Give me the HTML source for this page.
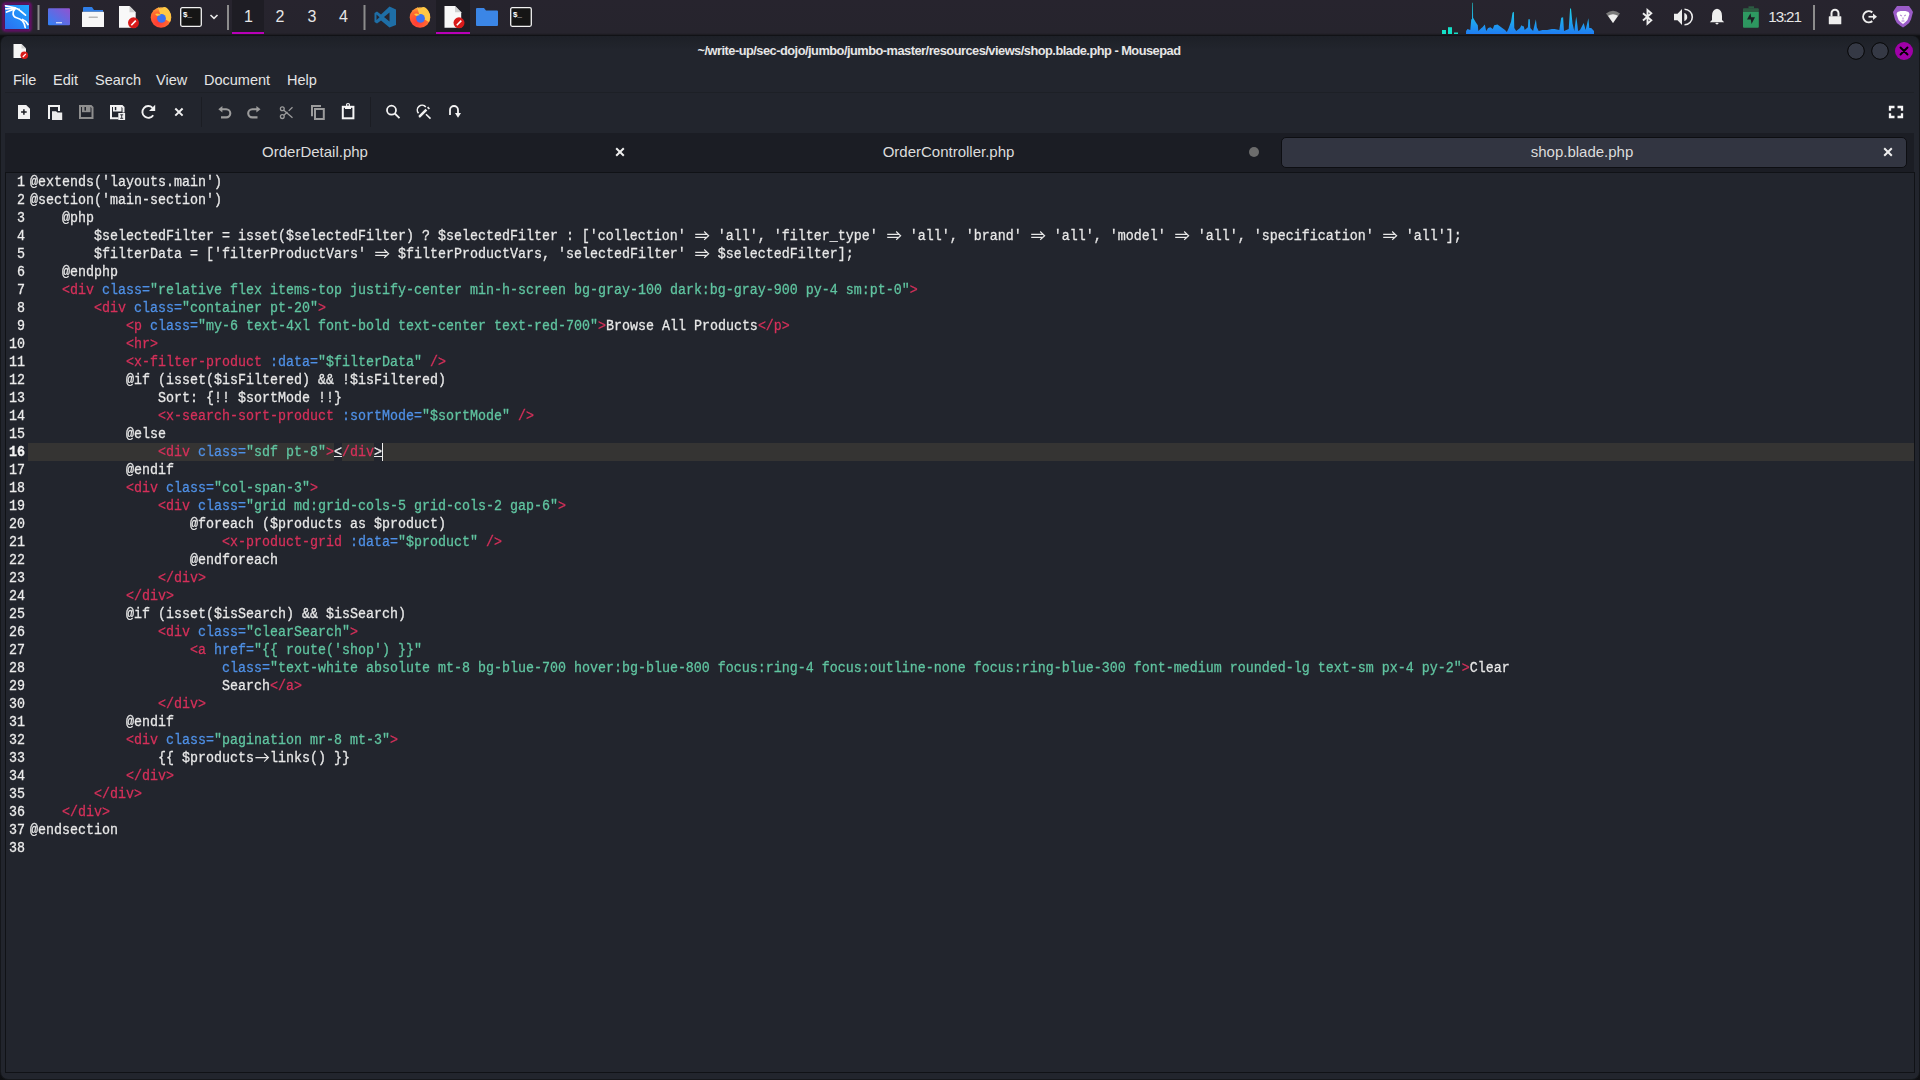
<!DOCTYPE html>
<html><head><meta charset="utf-8">
<style>
*{margin:0;padding:0;box-sizing:border-box}
html,body{width:1920px;height:1080px;overflow:hidden;background:#0e0f12;font-family:"Liberation Sans",sans-serif}
.abs{position:absolute}
#panel{position:absolute;left:0;top:0;width:1920px;height:36px;background:linear-gradient(#27242e 0,#26242d 33px,#1d1c22 34.5px,#111216 35px,#111216 36px)}
#win{position:absolute;left:0;top:36px;width:1920px;height:1044px;background:linear-gradient(#1d2027 0,#22252d 14px);border-radius:7px 7px 8px 8px;border:1px solid #15171b;border-top:none}
#title{position:absolute;left:0;top:43px;width:1878px;text-align:center;font-weight:bold;font-size:12.8px;letter-spacing:-0.5px;color:#e6e6e6;line-height:16px}
.menu{position:absolute;top:71px;font-size:14.5px;color:#e4e4e4;line-height:18px}
#tabbar{position:absolute;left:5px;top:133px;width:1909px;height:39px;background:#1b1d24}
.tab{position:absolute;top:0;height:39px;font-size:15px;color:#dcdcdc;line-height:39px;text-align:center}
#editor{position:absolute;left:5px;top:172px;width:1910px;height:901px;background:#22252d;border:1px solid #101216}
#gutter{position:absolute;left:0;top:174px;width:25px;font-family:"Liberation Mono",monospace;font-size:13.34px;line-height:18px;color:#ececec;text-align:right;white-space:pre}
#gutter .cur{font-weight:bold;color:#f4f4f4}
#code{position:absolute;left:30px;top:174px;font-family:"Liberation Mono",monospace;font-size:13.34px;line-height:18px;color:#e8e8e8;white-space:pre}
#code div,#gutter div{height:18px;transform:scaleY(1.1);transform-origin:0 12.6px;-webkit-text-stroke:0.25px currentColor}
.t{color:#d6305a}
.a{color:#4f90e6}
.s{color:#60c4a0}
.tn{color:#d6305a}
.m{color:#f0f0f0}
#curline{position:absolute;left:28px;top:443px;width:1886px;height:18px;background:#353433}
#cursor{position:absolute;left:382px;top:443px;width:1px;height:18px;background:#f0f0f0}
i.dar,i.sar{display:inline-block;width:16px;height:18px;vertical-align:top;position:relative}
i.dar::before{content:"";position:absolute;left:2px;top:6px;width:9px;height:5px;border-top:1.5px solid #e8e8e8;border-bottom:1.5px solid #e8e8e8}
i.dar::after{content:"";position:absolute;left:8px;top:5px;width:6px;height:6px;border-top:1.5px solid #e8e8e8;border-right:1.5px solid #e8e8e8;transform:rotate(45deg) translate(1px,1px)}
i.sar::before{content:"";position:absolute;left:2px;top:9px;width:11px;height:0;border-top:1.5px solid #e8e8e8}
i.sar::after{content:"";position:absolute;left:8px;top:6px;width:5px;height:5px;border-top:1.5px solid #e8e8e8;border-right:1.5px solid #e8e8e8;transform:rotate(45deg) translate(1px,1px)}
svg{position:absolute;overflow:visible}
svg.lig{position:static;display:inline-block;vertical-align:top}
</style></head><body>
<div id="panel"></div>
<div id="win"></div>
<svg style="left:0;top:0" width="1920" height="36" viewBox="0 0 1920 36">
<defs>
<linearGradient id="kg" x1="0" y1="1" x2="1" y2="0"><stop offset="0" stop-color="#2b6ef0"/><stop offset="1" stop-color="#1fa5ff"/></linearGradient>
<linearGradient id="dg" x1="0" y1="1" x2="1" y2="0"><stop offset="0" stop-color="#2f82f6"/><stop offset="1" stop-color="#9352cf"/></linearGradient>
<radialGradient id="ffg" cx="0.35" cy="0.75" r="0.9"><stop offset="0" stop-color="#ff3838"/><stop offset="0.55" stop-color="#ff6a30"/><stop offset="1" stop-color="#ffd84a"/></radialGradient>
<linearGradient id="cpug" x1="0" y1="0" x2="0" y2="1"><stop offset="0" stop-color="#1ee6e6"/><stop offset="1" stop-color="#1f7cf2"/></linearGradient>
<linearGradient id="batg" x1="0" y1="0" x2="0" y2="1"><stop offset="0" stop-color="#2c5c42"/><stop offset="0.18" stop-color="#2c5c42"/><stop offset="0.18" stop-color="#2e9a62"/><stop offset="1" stop-color="#2d955f"/></linearGradient>
</defs>
<!-- kali -->
<filter id="glow" x="-30%" y="-30%" width="160%" height="160%"><feGaussianBlur stdDeviation="0.9"/></filter><rect x="3.6" y="3.6" width="26.8" height="26.8" rx="1.5" fill="none" stroke="#8c0a8c" stroke-width="1.8" filter="url(#glow)"/>
<rect x="5" y="5" width="24" height="24" fill="url(#kg)"/>
<g fill="none" stroke="#fff" stroke-width="1.7" stroke-linecap="round" stroke-linejoin="round">
<path d="M5.5 5.8 L15 7.8 M5.8 8.8 L14.5 8.2 M6.5 12 L14.8 9"/>
<path d="M14.8 7.8 C17 8.2 19 9.5 20.5 11 L25.5 15.2"/>
<path d="M14.8 9.2 C12 12 12.5 16.8 16.5 17.8 C21.5 19 24.5 21.5 25.2 27.5"/>
<path d="M22.5 19.5 C25 20.5 27 22.5 28 24.5"/>
</g>
<circle cx="19.3" cy="9.2" r="0.8" fill="#fff"/>
<rect x="37.5" y="5" width="2" height="25" fill="#8c8c8c"/>
<!-- desktop -->
<rect x="48" y="8.3" width="22" height="17" rx="1" fill="url(#dg)"/>
<rect x="56.3" y="22" width="1.4" height="1.4" fill="#fff"/><rect x="58.3" y="22" width="1.4" height="1.4" fill="#fff"/><rect x="60.3" y="22" width="1.4" height="1.4" fill="#fff"/>
<!-- folder white -->
<path d="M83 11.7 V8 Q83 7 84 7 H92 L94 10 H103 V11.7 Z" fill="#2f7ee8"/>
<rect x="82" y="11.7" width="22" height="15.3" rx="0.5" fill="#f7f7f7"/>
<rect x="88.5" y="16.5" width="9.5" height="1.6" rx="0.8" fill="#b8b8b8"/>
<!-- mousepad -->
<path d="M119 6 H129.5 L135.7 12.2 V27.7 H119 Z" fill="#f8f8f8"/>
<path d="M129.5 6 L135.7 12.2 H129.5 Z" fill="#cfcfcf"/>
<circle cx="133.5" cy="22.8" r="5.5" fill="#d91a1a"/>
<path d="M131.3 25.2 L135.8 20.6" stroke="#fff" stroke-width="1.6"/>
<!-- firefox -->
<circle cx="161" cy="17.5" r="10.3" fill="url(#ffg)"/>
<path d="M158 7 Q161 10 162 8 Q166 5 170 12 Q172 17 170 22 L161 17 Z" fill="#ffc845"/>
<circle cx="161.5" cy="18.3" r="4.4" fill="#3a72f2"/>
<path d="M155 14 Q158 12.5 161 15 L157 16 Z" fill="#ffc83a"/>
<!-- terminal -->
<rect x="180.7" y="7.7" width="20.6" height="18.6" rx="1.5" fill="#151515" stroke="#f2f2f2" stroke-width="1.3"/>
<text x="183" y="16.5" font-family="Liberation Sans" font-weight="bold" font-size="8" fill="#fff">$_</text>
<path d="M210.5 15 L214 18.3 L217.5 15" fill="none" stroke="#e8e8e8" stroke-width="1.6"/>
<rect x="227" y="5" width="2" height="25" fill="#8c8c8c"/>
<!-- workspaces -->
<rect x="232" y="0" width="32" height="32" fill="#1e1d24"/>
<rect x="232" y="32" width="32" height="2" fill="#b800b8"/>
<g font-family="Liberation Sans" font-size="16" fill="#e6e6e6" text-anchor="middle">
<text x="248.5" y="22.1">1</text><text x="280" y="22.1">2</text><text x="312" y="22.1">3</text><text x="343.5" y="22.1">4</text>
</g>
<rect x="363.5" y="5" width="2" height="25" fill="#8c8c8c"/>
<!-- vscode -->
<path d="M389.5 6.5 L396 9.5 V25 L389.5 27.5 L381 20.5 L377 23.5 L374.5 22 V13 L377 11.5 L381 14.5 Z M389.5 12.5 L384 17 L389.5 21.5 Z M376.5 14.5 V20 L379.5 17.2 Z" fill="#1e6ea6" fill-rule="evenodd"/>
<!-- firefox 2 -->
<circle cx="420" cy="17.5" r="10.3" fill="url(#ffg)"/>
<path d="M417 7 Q420 10 421 8 Q425 5 429 12 Q431 17 429 22 L420 17 Z" fill="#ffc845"/>
<circle cx="420.5" cy="18.3" r="4.4" fill="#3a72f2"/>
<path d="M414 14 Q417 12.5 420 15 L416 16 Z" fill="#ffc83a"/>
<!-- active mousepad -->
<rect x="436" y="0" width="34" height="32" fill="#1e1d24"/>
<rect x="436" y="32" width="34" height="2" fill="#b800b8"/>
<path d="M444.5 6 H455 L461.2 12.2 V27.7 H444.5 Z" fill="#f8f8f8"/>
<path d="M455 6 L461.2 12.2 H455 Z" fill="#cfcfcf"/>
<circle cx="459" cy="22.8" r="5.5" fill="#d91a1a"/>
<path d="M456.8 25.2 L461.3 20.6" stroke="#fff" stroke-width="1.6"/>
<!-- blue folder -->
<path d="M476 11 V9 Q476 8 477 8 H484 L486 10.5 H497 Q498 10.5 498 11.5 V25 Q498 26 497 26 H477 Q476 26 476 25 Z" fill="#3b86e6"/>
<!-- terminal 2 -->
<rect x="510.7" y="7.7" width="20.6" height="18.6" rx="1.5" fill="#151515" stroke="#f2f2f2" stroke-width="1.3"/>
<text x="513" y="16.5" font-family="Liberation Sans" font-weight="bold" font-size="8" fill="#fff">$_</text>
<!-- cpu -->
<rect x="1442" y="30" width="4" height="4" fill="#14e0c8"/>
<rect x="1448" y="27.2" width="4" height="6.8" fill="#14e0c8"/>
<rect x="1454" y="32.5" width="4" height="1.5" fill="#14e0c8"/>
<path id="cpu" fill="url(#cpug)" d="M1466 34 L1466.1 30.9 L1467.5 29.1 L1470.3 30.0 L1471.2 19.7 L1472.0 18.7 L1472.4 2.8 L1472.9 2.8 L1473.1 17.8 L1475.9 22.5 L1477.8 25.3 L1478.3 30.9 L1481.5 28.1 L1482.5 27.2 L1484.8 24.4 L1486.2 30.9 L1488.1 28.1 L1490.4 27.2 L1492.8 29.1 L1494.2 25.3 L1497.5 24.4 L1501.2 27.2 L1505.0 30.0 L1506.9 31.9 L1508.7 28.1 L1511.1 21.6 L1512.5 12.7 L1513.9 11.7 L1514.3 28.1 L1516.2 30.9 L1520.0 28.1 L1521.4 25.3 L1522.8 26.2 L1523.7 26.2 L1524.7 30.0 L1527.9 27.2 L1528.4 19.2 L1529.8 19.2 L1530.3 28.1 L1533.1 30.9 L1535.9 19.2 L1536.8 27.2 L1538.7 30.9 L1542.5 30.0 L1547.2 30.0 L1551.8 29.1 L1554.6 29.1 L1559.3 30.0 L1561.2 17.8 L1563.1 17.3 L1564.0 30.9 L1568.7 29.1 L1570.1 8.4 L1571.0 8.4 L1572.5 23.4 L1574.3 30.9 L1576.2 16.4 L1577.1 22.5 L1578.1 30.9 L1580.0 30.0 L1583.7 23.0 L1585.6 30.0 L1588.4 18.3 L1589.3 28.1 L1591.2 28.1 L1594.0 30.9 L1594 34 Z"/>
<!-- wifi -->
<path d="M1613 23 L1606 13.5 Q1613 8 1620 13.5 Z" fill="#7a7a7a"/>
<path d="M1613 23 L1608 15.8 Q1613 12.8 1618 15.8 Z" fill="#eeeeee"/>
<!-- bluetooth -->
<path d="M1643 13.2 L1651.3 20.3 L1647.5 23.6 V10 L1651.3 13.3 L1643 20.5" fill="none" stroke="#eeeeee" stroke-width="1.9" stroke-linejoin="miter"/>
<!-- volume -->
<path d="M1674 13.8 H1677.5 L1682 9 V25 L1677.5 20.2 H1674 Z" fill="#eeeeee"/>
<path d="M1684.5 9.2 A7.8 7.8 0 0 1 1684.5 24.8" fill="none" stroke="#eeeeee" stroke-width="1.6"/>
<path d="M1684.3 13 A4.2 4.2 0 0 1 1684.3 21 Z" fill="#eeeeee"/>
<!-- bell -->
<path d="M1717 8.8 Q1722 9.5 1722 16 V20 L1724.2 22.2 H1709.8 L1712 20 V16 Q1712 9.5 1717 8.8 Z" fill="#eeeeee"/>
<ellipse cx="1717" cy="23.6" rx="1.6" ry="0.8" fill="#eeeeee"/>
<!-- battery -->
<rect x="1748.5" y="6.3" width="5.5" height="2" fill="#2c5c42"/>
<rect x="1743" y="8.2" width="15.8" height="19.6" rx="1" fill="url(#batg)"/>
<path d="M1750.5 13.2 L1747 19.5 H1750.8 L1751.5 24 L1755 17.3 H1751.2 Z" fill="#1d1e24"/>
<!-- clock -->
<text x="1768.3" y="22" font-family="Liberation Sans" font-size="15.2" letter-spacing="-1.1" fill="#e6e6e6">13:21</text>
<rect x="1813" y="5" width="2" height="25" fill="#8c8c8c"/>
<!-- lock -->
<path d="M1831.5 16.5 V13.2 A3.5 3.5 0 0 1 1838.5 13.2 V16.5" fill="none" stroke="#eeeeee" stroke-width="2"/>
<rect x="1828.8" y="16.2" width="12.5" height="8" rx="0.5" fill="#eeeeee"/>
<!-- logout -->
<path d="M1872.3 12.4 A5.6 5.6 0 1 0 1872.3 21.1" fill="none" stroke="#eeeeee" stroke-width="2"/>
<path d="M1868.5 16.75 H1874" stroke="#eeeeee" stroke-width="1.7"/>
<path d="M1873 13.5 L1877 16.75 L1873 20 Z" fill="#eeeeee"/>
<!-- brave -->
<path d="M1897 6 H1909 L1911.5 9.5 L1913 12 L1911 19.5 Q1910 23 1906 25.5 L1903 27.5 L1900 25.5 Q1896 23 1895 19.5 L1893 12 L1894.5 9.5 Z" fill="#9b5cc8"/>
<path d="M1897.5 12 L1900.5 11 H1905.5 L1908.5 12 L1909.5 14 L1907.5 20 L1905.5 22 L1903 24 L1900.5 22 L1898.5 20 L1896.5 14 Z" fill="#ffffff"/>
<path d="M1900 15 L1902 16 M1906 15 L1904 16 M1903 17.5 V19.5 M1901.5 21 H1904.5" stroke="#9b5cc8" stroke-width="0.8" fill="none"/>
</svg>
<svg style="left:0;top:36px" width="1920" height="100" viewBox="0 36 1920 100">
<!-- title icon -->
<path d="M13.5 44 H21.5 L26 48.5 V58 H13.5 Z" fill="#f6f6f6"/>
<path d="M21.5 44 L26 48.5 H21.5 Z" fill="#cfcfcf"/>
<circle cx="24.3" cy="55.3" r="3.8" fill="#d91a1a"/>
<path d="M22.8 57 L25.8 53.8" stroke="#fff" stroke-width="1.2"/>
<!-- window buttons -->
<circle cx="1856" cy="51" r="8.3" fill="#353945" stroke="#050505" stroke-width="1"/>
<circle cx="1880" cy="51" r="8.3" fill="#353945" stroke="#050505" stroke-width="1"/>
<circle cx="1904" cy="51" r="9" fill="#a000a8"/>
<path d="M1900.5 47.5 L1907.5 54.5 M1907.5 47.5 L1900.5 54.5" stroke="#000" stroke-width="1.9" stroke-linecap="round"/>
<!-- menu separator -->
<rect x="5" y="92" width="1909" height="1" fill="#1d2026"/>
<!-- toolbar -->
<g fill="#f2f2f2">
<path d="M18 105 H26.2 L30 108.8 V119 H18 Z"/>
</g>
<path d="M23.9 109.2 V114.8 M21.1 112 H26.7" stroke="#1c1e24" stroke-width="1.5"/>
<path d="M49 119 V106 H59 V111" fill="none" stroke="#f2f2f2" stroke-width="2"/>
<path d="M52 120 V111.3 H56 L57.5 112.5 H62.2 V120 Z" fill="#ececec"/>
<!-- save grey -->
<path d="M80 106 H91 L92.5 107.5 V118 H80 Z" fill="none" stroke="#8e8e8e" stroke-width="2"/>
<rect x="82" y="106" width="8.5" height="6.2" fill="#8e8e8e"/>
<rect x="84.5" y="107" width="1.5" height="3.6" fill="#22252c"/>
<!-- save as -->
<path d="M118.5 118.2 H111 V106 H122 L123.5 107.5 V112.5" fill="none" stroke="#f2f2f2" stroke-width="2"/>
<rect x="113" y="106" width="8.5" height="5.5" fill="#f2f2f2"/>
<rect x="114.8" y="107" width="1.5" height="3.2" fill="#22252c"/>
<rect x="118.3" y="113" width="6.8" height="7" fill="#f2f2f2"/>
<path d="M120.2 114.8 H123.2 M121.7 114.8 V118.3 M120.2 118.3 H123.2" stroke="#22252c" stroke-width="0.9"/>
<!-- reload -->
<path d="M153.2 115.2 A5.9 5.9 0 1 1 152.5 107.8" fill="none" stroke="#f2f2f2" stroke-width="1.9"/>
<path d="M155.2 104.8 V111 H149 Z" fill="#f2f2f2"/>
<!-- close -->
<path d="M175.3 108.5 L182.6 115.6 M182.6 108.5 L175.3 115.6" stroke="#efefef" stroke-width="2"/>
<rect x="201" y="97" width="1" height="30" fill="#1b1d23"/>
<!-- undo -->
<path d="M221 109.2 H226.2 A4.1 4.1 0 0 1 226.2 117.4 H221" fill="none" stroke="#9c9c9c" stroke-width="2.1"/>
<path d="M218.3 109.2 L222.4 106 V112.4 Z" fill="#9c9c9c"/>
<!-- redo -->
<path d="M257.5 109.2 H252.3 A4.1 4.1 0 0 0 252.3 117.4 H257.5" fill="none" stroke="#9c9c9c" stroke-width="2.1"/>
<path d="M260.5 109.2 L256.4 106 V112.4 Z" fill="#9c9c9c"/>
<!-- cut -->
<g fill="none" stroke="#9c9c9c" stroke-width="1.3">
<circle cx="282.3" cy="108.7" r="1.9"/>
<circle cx="282.3" cy="116.6" r="1.9"/>
<path d="M283.8 115.2 L287.5 112 M288.7 110.9 L292.5 107.2 M283.8 110.2 L292.5 117.7"/>
</g>
<!-- copy -->
<path d="M312 116.3 V106 H321" fill="none" stroke="#9c9c9c" stroke-width="2"/>
<rect x="315" y="109" width="8.8" height="10" fill="none" stroke="#9c9c9c" stroke-width="2"/>
<!-- paste -->
<rect x="342.8" y="106.8" width="10.6" height="11.5" fill="none" stroke="#f6f6f6" stroke-width="2"/>
<path d="M345 106 H351 V109 H345 Z" fill="#f6f6f6"/>
<circle cx="348" cy="105" r="1.5" fill="none" stroke="#f6f6f6" stroke-width="1.2"/>
<rect x="370" y="97" width="1" height="30" fill="#1b1d23"/>
<!-- find -->
<circle cx="391.5" cy="110.2" r="4.5" fill="none" stroke="#f2f2f2" stroke-width="1.8"/>
<path d="M394.8 113.5 L399.5 118.2" stroke="#f2f2f2" stroke-width="1.8"/>
<!-- replace -->
<path d="M418.5 113.2 A4.6 4.6 0 0 1 425.8 106.9" fill="none" stroke="#f2f2f2" stroke-width="1.6"/>
<path d="M419 117.6 L418.5 115.8 L425.5 108.8 L427.3 110.6 L420.3 117.6 Z" fill="#f2f2f2"/>
<path d="M427 107.8 L428.2 106.6 L430 108.4 L428.8 109.6 Z" fill="#f2f2f2"/>
<path d="M426 114.2 L430.5 118.6" stroke="#f2f2f2" stroke-width="1.6"/>
<!-- goto -->
<path d="M450 115 V110 A4 4 0 0 1 458 110 V113.5" fill="none" stroke="#f2f2f2" stroke-width="1.8"/>
<path d="M455 113 H461 L458 117.8 Z" fill="#f2f2f2"/>
<!-- fullscreen -->
<path d="M1890 110.7 V107 H1894.5 M1897.5 107 H1902 V110.7 M1902 113.3 V117 H1897.5 M1894.5 117 H1890 V113.3" fill="none" stroke="#f6f6f6" stroke-width="2.3"/>
</svg>

<!-- title bar -->
<div id="title">~/write-up/sec-dojo/jumbo/jumbo-master/resources/views/shop.blade.php - Mousepad</div>

<!-- menu -->
<div class="menu" style="left:13px">File</div>
<div class="menu" style="left:53px">Edit</div>
<div class="menu" style="left:95px">Search</div>
<div class="menu" style="left:156px">View</div>
<div class="menu" style="left:204px">Document</div>
<div class="menu" style="left:287px">Help</div>

<!-- tabs -->
<div id="tabbar"></div>
<div class="tab" style="left:5px;top:132px;width:620px">OrderDetail.php</div>
<div class="tab" style="left:641px;top:132px;width:615px">OrderController.php</div>
<div class="abs" style="left:1281px;top:137px;width:626px;height:31px;background:#323541;border:1px solid #0d0e12;border-radius:5px"></div>
<div class="tab" style="left:1281px;top:132px;width:602px">shop.blade.php</div>

<!-- tab decorations -->
<svg style="left:0;top:133px" width="1920" height="40" viewBox="0 133 1920 40">
<path d="M616.2 148.2 L623.8 155.8 M623.8 148.2 L616.2 155.8" stroke="#eeeeee" stroke-width="2"/>
<circle cx="1254" cy="152" r="5" fill="#6c6c6c"/>
<path d="M1884.2 148.2 L1891.8 155.8 M1891.8 148.2 L1884.2 155.8" stroke="#eeeeee" stroke-width="2"/>
</svg>
<div id="editor"></div>
<div id="curline"></div>
<div class="abs" style="left:334px;top:443px;width:8px;height:18px;background:#22252d"></div><div class="abs" style="left:374px;top:443px;width:8px;height:18px;background:#22252d"></div>
<div id="gutter"><div>1</div><div>2</div><div>3</div><div>4</div><div>5</div><div>6</div><div>7</div><div>8</div><div>9</div><div>10</div><div>11</div><div>12</div><div>13</div><div>14</div><div>15</div><div class=cur>16</div><div>17</div><div>18</div><div>19</div><div>20</div><div>21</div><div>22</div><div>23</div><div>24</div><div>25</div><div>26</div><div>27</div><div>28</div><div>29</div><div>30</div><div>31</div><div>32</div><div>33</div><div>34</div><div>35</div><div>36</div><div>37</div><div>38</div></div>
<div id="code"><div>@extends('layouts.main')</div><div>@section('main-section')</div><div>    @php</div><div>        $selectedFilter = isset($selectedFilter) ? $selectedFilter : ['collection' <svg class="lig" width="16" height="18" viewBox="0 0 16 18"><path d="M1.2 6.87 H13.3 M1.2 9.69 H13.3 M10.2 4.42 L14.6 8.24 L10.2 11.9" fill="none" stroke="#e8e8e8" stroke-width="1.15"/></svg> 'all', 'filter_type' <svg class="lig" width="16" height="18" viewBox="0 0 16 18"><path d="M1.2 6.87 H13.3 M1.2 9.69 H13.3 M10.2 4.42 L14.6 8.24 L10.2 11.9" fill="none" stroke="#e8e8e8" stroke-width="1.15"/></svg> 'all', 'brand' <svg class="lig" width="16" height="18" viewBox="0 0 16 18"><path d="M1.2 6.87 H13.3 M1.2 9.69 H13.3 M10.2 4.42 L14.6 8.24 L10.2 11.9" fill="none" stroke="#e8e8e8" stroke-width="1.15"/></svg> 'all', 'model' <svg class="lig" width="16" height="18" viewBox="0 0 16 18"><path d="M1.2 6.87 H13.3 M1.2 9.69 H13.3 M10.2 4.42 L14.6 8.24 L10.2 11.9" fill="none" stroke="#e8e8e8" stroke-width="1.15"/></svg> 'all', 'specification' <svg class="lig" width="16" height="18" viewBox="0 0 16 18"><path d="M1.2 6.87 H13.3 M1.2 9.69 H13.3 M10.2 4.42 L14.6 8.24 L10.2 11.9" fill="none" stroke="#e8e8e8" stroke-width="1.15"/></svg> 'all'];</div><div>        $filterData = ['filterProductVars' <svg class="lig" width="16" height="18" viewBox="0 0 16 18"><path d="M1.2 6.87 H13.3 M1.2 9.69 H13.3 M10.2 4.42 L14.6 8.24 L10.2 11.9" fill="none" stroke="#e8e8e8" stroke-width="1.15"/></svg> $filterProductVars, 'selectedFilter' <svg class="lig" width="16" height="18" viewBox="0 0 16 18"><path d="M1.2 6.87 H13.3 M1.2 9.69 H13.3 M10.2 4.42 L14.6 8.24 L10.2 11.9" fill="none" stroke="#e8e8e8" stroke-width="1.15"/></svg> $selectedFilter];</div><div>    @endphp</div><div>    <span class="t">&lt;div</span> <span class="a">class=</span><span class="s">"relative flex items-top justify-center min-h-screen bg-gray-100 dark:bg-gray-900 py-4 sm:pt-0"</span><span class="t">&gt;</span></div><div>        <span class="t">&lt;div</span> <span class="a">class=</span><span class="s">"container pt-20"</span><span class="t">&gt;</span></div><div>            <span class="t">&lt;p</span> <span class="a">class=</span><span class="s">"my-6 text-4xl font-bold text-center text-red-700"</span><span class="t">&gt;</span>Browse All Products<span class="t">&lt;/p&gt;</span></div><div>            <span class="t">&lt;hr&gt;</span></div><div>            <span class="t">&lt;x-filter-product</span> <span class="a">:data=</span><span class="s">"$filterData"</span> <span class="t">/&gt;</span></div><div>            @if (isset($isFiltered) &amp;&amp; !$isFiltered)</div><div>                Sort: {!! $sortMode !!}</div><div>                <span class="t">&lt;x-search-sort-product</span> <span class="a">:sortMode=</span><span class="s">"$sortMode"</span> <span class="t">/&gt;</span></div><div>            @else</div><div>                <span class="t">&lt;div</span> <span class="a">class=</span><span class="s">"sdf pt-8"</span><span class="t">&gt;</span><span class="m">&lt;</span><span class="tn">/div</span><span class="m">&gt;</span></div><div>            @endif</div><div>            <span class="t">&lt;div</span> <span class="a">class=</span><span class="s">"col-span-3"</span><span class="t">&gt;</span></div><div>                <span class="t">&lt;div</span> <span class="a">class=</span><span class="s">"grid md:grid-cols-5 grid-cols-2 gap-6"</span><span class="t">&gt;</span></div><div>                    @foreach ($products as $product)</div><div>                        <span class="t">&lt;x-product-grid</span> <span class="a">:data=</span><span class="s">"$product"</span> <span class="t">/&gt;</span></div><div>                    @endforeach</div><div>                <span class="t">&lt;/div&gt;</span></div><div>            <span class="t">&lt;/div&gt;</span></div><div>            @if (isset($isSearch) &amp;&amp; $isSearch)</div><div>                <span class="t">&lt;div</span> <span class="a">class=</span><span class="s">"clearSearch"</span><span class="t">&gt;</span></div><div>                    <span class="t">&lt;a</span> <span class="a">href=</span><span class="s">"{{ route('shop') }}"</span></div><div>                        <span class="a">class=</span><span class="s">"text-white absolute mt-8 bg-blue-700 hover:bg-blue-800 focus:ring-4 focus:outline-none focus:ring-blue-300 font-medium rounded-lg text-sm px-4 py-2"</span><span class="t">&gt;</span>Clear</div><div>                        Search<span class="t">&lt;/a&gt;</span></div><div>                <span class="t">&lt;/div&gt;</span></div><div>            @endif</div><div>            <span class="t">&lt;div</span> <span class="a">class=</span><span class="s">"pagination mr-8 mt-3"</span><span class="t">&gt;</span></div><div>                {{ $products<svg class="lig" width="16" height="18" viewBox="0 0 16 18"><path d="M1.4 8.05 H14 M10.2 4.33 L14.4 8.05 L10.2 11.7" fill="none" stroke="#e8e8e8" stroke-width="1.15"/></svg>links() }}</div><div>            <span class="t">&lt;/div&gt;</span></div><div>        <span class="t">&lt;/div&gt;</span></div><div>    <span class="t">&lt;/div&gt;</span></div><div>@endsection</div><div></div></div>
<div class="abs" style="left:334px;top:456px;width:8px;height:1px;background:#e8e8e8"></div><div class="abs" style="left:374px;top:456px;width:8px;height:1px;background:#e8e8e8"></div>
<div id="cursor"></div>
</body></html>
